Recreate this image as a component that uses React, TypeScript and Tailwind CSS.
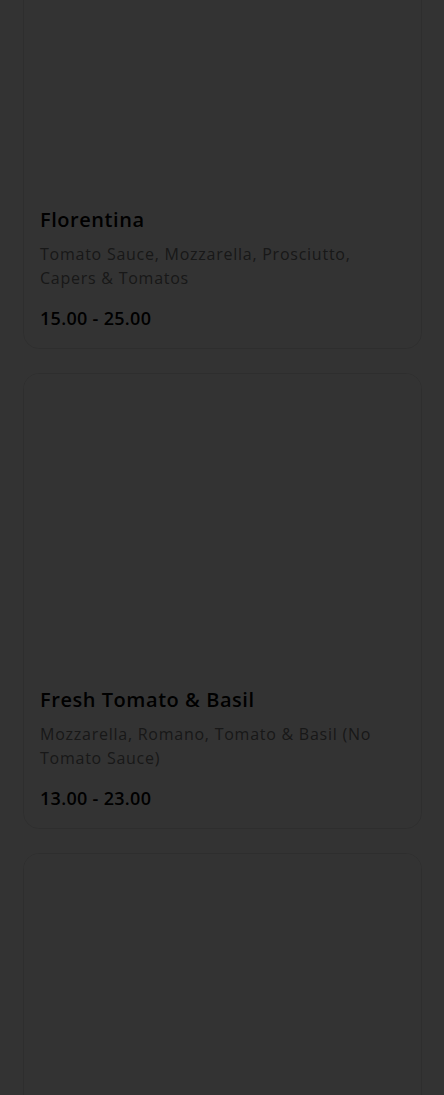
import React from "react";

type Pizza = { name: string; desc: string; price: string };

const pizzas: Pizza[] = [
  {
    name: "Florentina",
    desc: "Tomato Sauce, Mozzarella, Prosciutto, Capers & Tomatos",
    price: "15.00 - 25.00",
  },
  {
    name: "Fresh Tomato & Basil",
    desc: "Mozzarella, Romano, Tomato & Basil (No Tomato Sauce)",
    price: "13.00 - 23.00",
  },
];

function PizzaCard({ p }: { p?: Pizza }) {
  return (
    <div className="rounded-2xl border border-[#e6e6e6] bg-white overflow-hidden">
      <div className="h-[296px] bg-white" />
      {p && (
        <div className="px-4 pt-4 pb-4">
          <h3 className="text-[20px] leading-7 font-semibold text-black tracking-[0.55px]">
            {p.name}
          </h3>
          <p className="mt-2 text-[16px] leading-6 text-[#777] tracking-[0.75px]">
            {p.desc}
          </p>
          <p className="mt-[14px] text-[18px] leading-7 font-semibold text-black tracking-[0.3px]">
            {p.price}
          </p>
        </div>
      )}
    </div>
  );
}

export default function App() {
  return (
    <div
      className="relative h-[1095px] overflow-hidden bg-white"
      style={{ fontFamily: '"Open Sans", "Noto Sans", sans-serif' }}
    >
      <div className="-mt-[107px] ml-[23px] mr-[22px] flex flex-col gap-6">
        {pizzas.map((p) => (
          <PizzaCard key={p.name} p={p} />
        ))}
        {/* next card, scrolled below the fold */}
        <PizzaCard />
      </div>
      <div className="absolute inset-0 bg-black/80" />
    </div>
  );
}
